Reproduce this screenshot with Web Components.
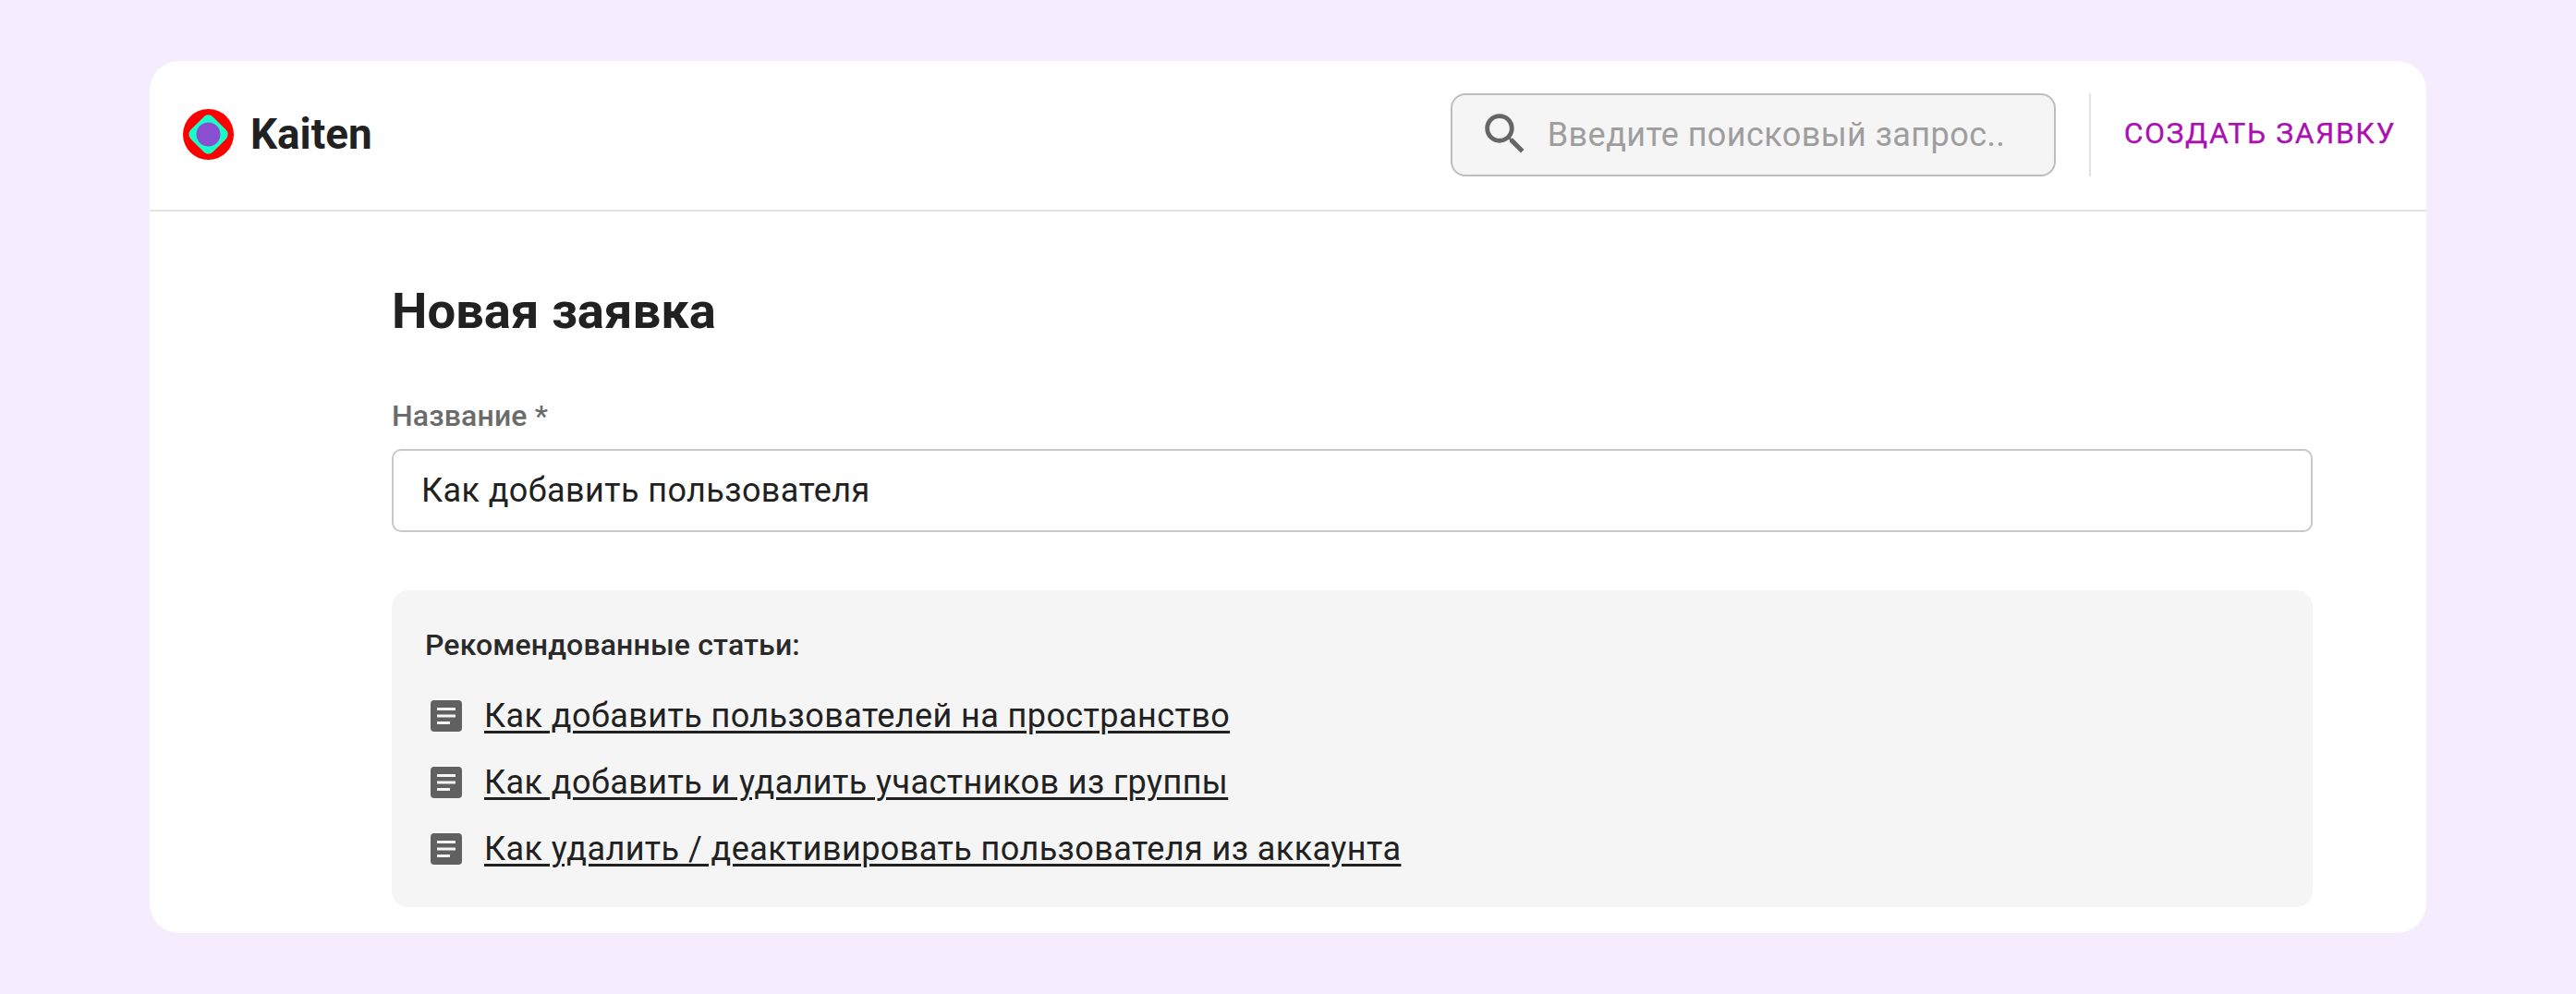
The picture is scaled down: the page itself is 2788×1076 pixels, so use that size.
<!DOCTYPE html>
<html lang="ru"><head><meta charset="utf-8"><title>Kaiten</title>
<style>
html,body{margin:0;padding:0;background:#f5edfd;}
body{height:1076px;overflow:hidden;font-family:Roboto,sans-serif;color:#212121;padding:66px 162px 0;box-sizing:border-box;}
</style></head><body>
<k-card>
  <k-header slot="header"></k-header>
  <h-title>Новая заявка</h-title>
  <k-field label="Название *" value="Как добавить пользователя"></k-field>
  <k-reco heading="Рекомендованные статьи:">
    <k-article>Как добавить пользователей на пространство</k-article>
    <k-article>Как добавить и удалить участников из группы</k-article>
    <k-article>Как удалить / деактивировать пользователя из аккаунта</k-article>
  </k-reco>
</k-card>
<script>
function def(name,html,init){customElements.define(name,class extends HTMLElement{constructor(){super();const s=this.attachShadow({mode:'open'});s.innerHTML=html;}connectedCallback(){if(init)init(this,this.shadowRoot);}});}
def('k-card',`<style>:host{display:block;width:2464px;height:944px;background:#fff;border-radius:32px;overflow:hidden}
.c{padding:0 123px 0 262px;display:flex;flex-direction:column}</style><slot name="header"></slot><div class="c"><slot></slot></div>`);
def('k-logo',`<style>:host{display:flex;align-items:center;gap:18px}
svg{width:55px;height:55px;display:block}
span{font:700 45.8px/54px Roboto,sans-serif;color:#212121}</style>
<svg viewBox="0 0 55 55"><circle cx="27.5" cy="27.5" r="27.5" fill="#ff0000"/><rect x="10.5" y="10.5" width="34" height="34" rx="7" transform="rotate(45 27.5 27.5)" fill="#16ffc8"/><circle cx="27.5" cy="27.5" r="13" fill="#8a4fd0"/></svg><span>Kaiten</span>`);
def('k-search',`<style>:host{display:flex;align-items:center;box-sizing:border-box;width:655px;height:90px;background:#f5f5f5;border:2px solid #bdbdbd;border-radius:16px;padding-left:28px;gap:17px}
svg{width:58px;height:58px;flex:none;margin-top:-2px}
span{font:400 36px/42px Roboto,sans-serif;color:#9e9e9e;letter-spacing:.42px;white-space:nowrap}</style>
<svg viewBox="0 0 24 24"><path fill="#666" d="M15.5 14h-.79l-.28-.27A6.47 6.47 0 0 0 16 9.5 6.5 6.5 0 1 0 9.5 16c1.61 0 3.09-.59 4.23-1.57l.27.28v.79l5 4.99L20.49 19l-4.99-5zm-6 0C7.01 14 5 11.99 5 9.5S7.01 5 9.5 5 14 7.01 14 9.5 11.99 14 9.5 14z"/></svg><span>Введите поисковый запрос..</span>`);
def('k-header',`<style>:host{display:flex;align-items:center;box-sizing:border-box;height:163px;border-bottom:2px solid #e4e4e4;padding:0 33px 2px 36px}
.sp{flex:1}.d{width:2px;height:90px;background:#e2e2e2;margin:0 36px 0 36px}
a{font:400 32px/38px Roboto,sans-serif;color:#aa11b0;letter-spacing:1.5px;white-space:nowrap;-webkit-text-stroke:.25px #aa11b0;margin-bottom:3px}</style>
<k-logo></k-logo><div class="sp"></div><k-search></k-search><div class="d"></div><a>СОЗДАТЬ ЗАЯВКУ</a>`);
def('h-title',`<style>:host{display:block;font:700 54.4px/62px Roboto,sans-serif;color:#212121;margin-top:77px}</style><slot></slot>`);
def('k-field',`<style>:host{display:block;margin-top:63px}
label{display:block;font:500 32px/38px Roboto,sans-serif;color:#6b6b6b;letter-spacing:.15px}
.i{box-sizing:border-box;height:90px;margin-top:17px;border:2px solid #c8c8c8;border-radius:10px;padding:0 30px;display:flex;align-items:center;font:400 36px/42px Roboto,sans-serif;color:#212121;letter-spacing:.4px}</style>
<label></label><div class="i"></div>`,(h,s)=>{s.querySelector('label').textContent=h.getAttribute('label');s.querySelector('.i').textContent=h.getAttribute('value');});
def('k-reco',`<style>:host{display:block;box-sizing:border-box;height:343px;margin-top:63px;background:#f5f5f5;border-radius:18px;padding:39px 36px 0}
h4{margin:0 0 36px;font:500 32px/40px Roboto,sans-serif;color:#2a2a2a;letter-spacing:.15px}
.l{display:flex;flex-direction:column;gap:30px}</style><h4></h4><div class="l"><slot></slot></div>`,(h,s)=>{s.querySelector('h4').textContent=h.getAttribute('heading');});
def('k-article',`<style>:host{display:flex;align-items:center;height:42px;gap:24px;padding-left:6px}
svg{width:34px;height:34px;flex:none}
a{font:400 36px/42px Roboto,sans-serif;color:#212121;text-decoration:underline;text-decoration-thickness:3px;text-underline-offset:4px;letter-spacing:.42px;white-space:nowrap}</style>
<svg viewBox="0 0 34 34"><rect width="34" height="34" rx="4" fill="#616161"/><path fill="#f5f5f5" d="M7 8h20v3H7zM7 15.5h20v3H7zM7 23h14v3H7z"/></svg><a><slot></slot></a>`);
</script>
</body></html>
